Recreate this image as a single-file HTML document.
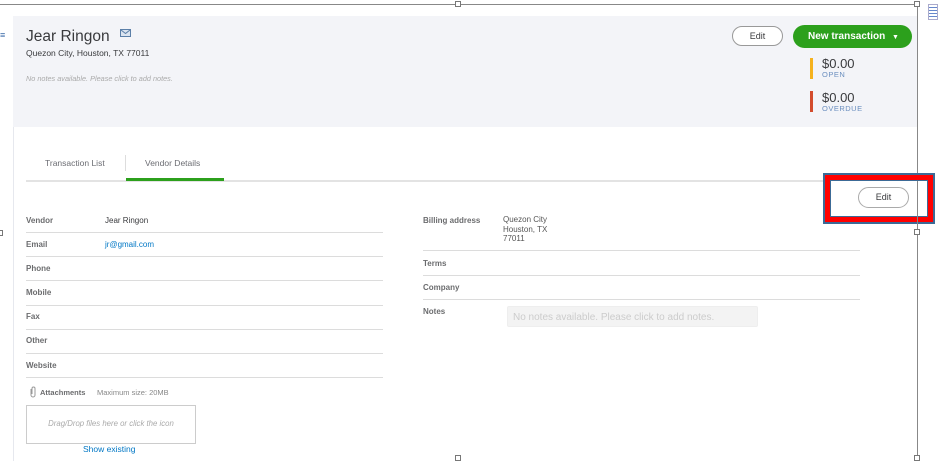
<!DOCTYPE html>
<html><head><style>
*{margin:0;padding:0;box-sizing:border-box}
body{width:938px;height:461px;background:#fff;font-family:"Liberation Sans",sans-serif;position:relative;overflow:hidden;color:#393a3d}
.a{position:absolute}
.lbl{font-size:8px;color:#393a3d;font-weight:bold;opacity:.75}
.val{font-size:8px;color:#393a3d}
.hr{position:absolute;height:1px;background:#dcdcdc}
.h{position:absolute;width:6px;height:6px;border:1px solid #777;background:#fff}
</style></head><body>
<div class="a" style="left:13px;top:16px;width:904px;height:111px;background:#f3f4f8"></div>
<div class="a" style="left:13px;top:127px;width:1px;height:334px;background:#e6e8ee"></div>
<div class="a" style="left:0;top:4px;width:918px;height:1px;background:#888"></div>
<div class="a" style="left:917px;top:4px;width:1px;height:457px;background:#888"></div>
<div class="h" style="left:455px;top:1px"></div>
<div class="h" style="left:914px;top:1px"></div>
<div class="h" style="left:914px;top:229px"></div>
<div class="h" style="left:914px;top:455px"></div>
<div class="h" style="left:455px;top:455px"></div>
<div class="h" style="left:-3px;top:230px"></div>
<div class="a" style="left:0;top:30px;font-size:9px;color:#3a6aa8">≡</div>
<div class="a" style="left:928px;top:4px;width:10px;height:16px;border:1px solid #aac;background:repeating-linear-gradient(#fff 0 2px,#68c 2px 3px)"></div>

<div class="a" style="left:26px;top:28px;font-size:15.5px;color:#393a3d">Jear Ringon</div>
<svg class="a" style="left:120px;top:29px" width="12" height="9"><rect x="0.5" y="0.5" width="10" height="7" fill="#dbe4f0" stroke="#5b7fa8"/><path d="M1 1l4.5 3.5L10 1" fill="none" stroke="#5b7fa8"/></svg>
<div class="a" style="left:26px;top:48px;font-size:8.5px">Quezon City, Houston, TX 77011</div>
<div class="a" style="left:26px;top:74px;font-size:7.3px;font-style:italic;color:#aaa">No notes available. Please click to add notes.</div>

<div class="a" style="left:732px;top:26px;width:51px;height:20px;border:1px solid #999;border-radius:10px;background:#fff;font-size:9px;text-align:center;line-height:18px">Edit</div>
<div class="a" style="left:793px;top:25px;width:119px;height:23px;border-radius:12px;background:#2ca01c;color:#fff;font-size:10px;font-weight:bold;line-height:23px;padding-left:15px">New transaction <span style="font-size:7px;margin-left:4px">▼</span></div>
<div class="a" style="left:810px;top:58px;width:3px;height:21px;background:#f5b21e"></div>
<div class="a" style="left:822px;top:56px;font-size:13px">$0.00</div>
<div class="a" style="left:822px;top:70px;font-size:7.5px;color:#6b8fbf;letter-spacing:.5px">OPEN</div>
<div class="a" style="left:810px;top:91px;width:3px;height:21px;background:#d34c2d"></div>
<div class="a" style="left:822px;top:90px;font-size:13px">$0.00</div>
<div class="a" style="left:822px;top:104px;font-size:7.5px;color:#6b8fbf;letter-spacing:.5px">OVERDUE</div>

<div class="a" style="left:45px;top:158px;font-size:8.5px;color:#6b6c72">Transaction List</div>
<div class="a" style="left:125px;top:155px;width:1px;height:16px;background:#ddd"></div>
<div class="a" style="left:145px;top:158px;font-size:8.5px;color:#6b6c72">Vendor Details</div>
<div class="a" style="left:26px;top:180px;width:891px;height:2px;background:#e3e3e3"></div>
<div class="a" style="left:126px;top:178px;width:98px;height:3px;background:#2ca01c"></div>

<div class="a" style="left:823px;top:173px;width:112px;height:51px;background:#3c6a96"></div>
<div class="a" style="left:825px;top:175px;width:108px;height:47px;background:#f00"></div>
<div class="a" style="left:830px;top:180px;width:98px;height:37px;background:#3c6a96"></div>
<div class="a" style="left:831px;top:181px;width:96px;height:35px;background:#fff"></div>
<div class="a" style="left:917px;top:181px;width:1px;height:44px;background:#888"></div>
<div class="a" style="left:858px;top:187px;width:51px;height:21px;border:1px solid #aaa;border-radius:11px;font-size:9px;text-align:center;line-height:19px">Edit</div>

<div class="a lbl" style="left:26px;top:216px">Vendor</div><div class="a val" style="left:105px;top:216px">Jear Ringon</div>
<div class="hr" style="left:26px;top:232px;width:357px"></div>
<div class="a lbl" style="left:26px;top:240px">Email</div><div class="a val" style="left:105px;top:240px;color:#0077c5">jr@gmail.com</div>
<div class="hr" style="left:26px;top:256px;width:357px"></div>
<div class="a lbl" style="left:26px;top:264px">Phone</div>
<div class="hr" style="left:26px;top:280px;width:357px"></div>
<div class="a lbl" style="left:26px;top:288px">Mobile</div>
<div class="hr" style="left:26px;top:305px;width:357px"></div>
<div class="a lbl" style="left:26px;top:312px">Fax</div>
<div class="hr" style="left:26px;top:329px;width:357px"></div>
<div class="a lbl" style="left:26px;top:336px">Other</div>
<div class="hr" style="left:26px;top:353px;width:357px"></div>
<div class="a lbl" style="left:26px;top:361px">Website</div>
<div class="hr" style="left:26px;top:377px;width:357px"></div>
<svg class="a" style="left:29px;top:386px" width="8" height="12"><path d="M2 3v6a2 2 0 004 0V2.5a1.5 1.5 0 00-3 0V8" fill="none" stroke="#999" stroke-width="1"/></svg>
<div class="a lbl" style="left:40px;top:388px;font-size:7.5px">Attachments</div>
<div class="a val" style="left:97px;top:388px;font-size:7.5px;color:#888">Maximum size: 20MB</div>
<div class="a" style="left:26px;top:405px;width:170px;height:39px;border:1px solid #ccc"></div>
<div class="a" style="left:26px;top:419px;width:170px;text-align:center;font-size:7.8px;font-style:italic;color:#aaa">Drag/Drop files here or click the icon</div>
<div class="a" style="left:83px;top:444px;font-size:8.5px;color:#0077c5">Show existing</div>

<div class="a lbl" style="left:423px;top:216px">Billing address</div>
<div class="a val" style="left:503px;top:215px;line-height:9.5px;color:#555">Quezon City<br>Houston, TX<br>77011</div>
<div class="hr" style="left:423px;top:250px;width:437px"></div>
<div class="a lbl" style="left:423px;top:259px">Terms</div>
<div class="hr" style="left:423px;top:275px;width:437px"></div>
<div class="a lbl" style="left:423px;top:283px">Company</div>
<div class="hr" style="left:423px;top:299px;width:437px"></div>
<div class="a lbl" style="left:423px;top:307px">Notes</div>
<div class="a" style="left:507px;top:306px;width:251px;height:21px;background:#f3f3f3;border:1px solid #eee;border-radius:2px;font-size:10px;color:#ccc;line-height:21px;padding-left:5px">No notes available. Please click to add notes.</div>
</body></html>
